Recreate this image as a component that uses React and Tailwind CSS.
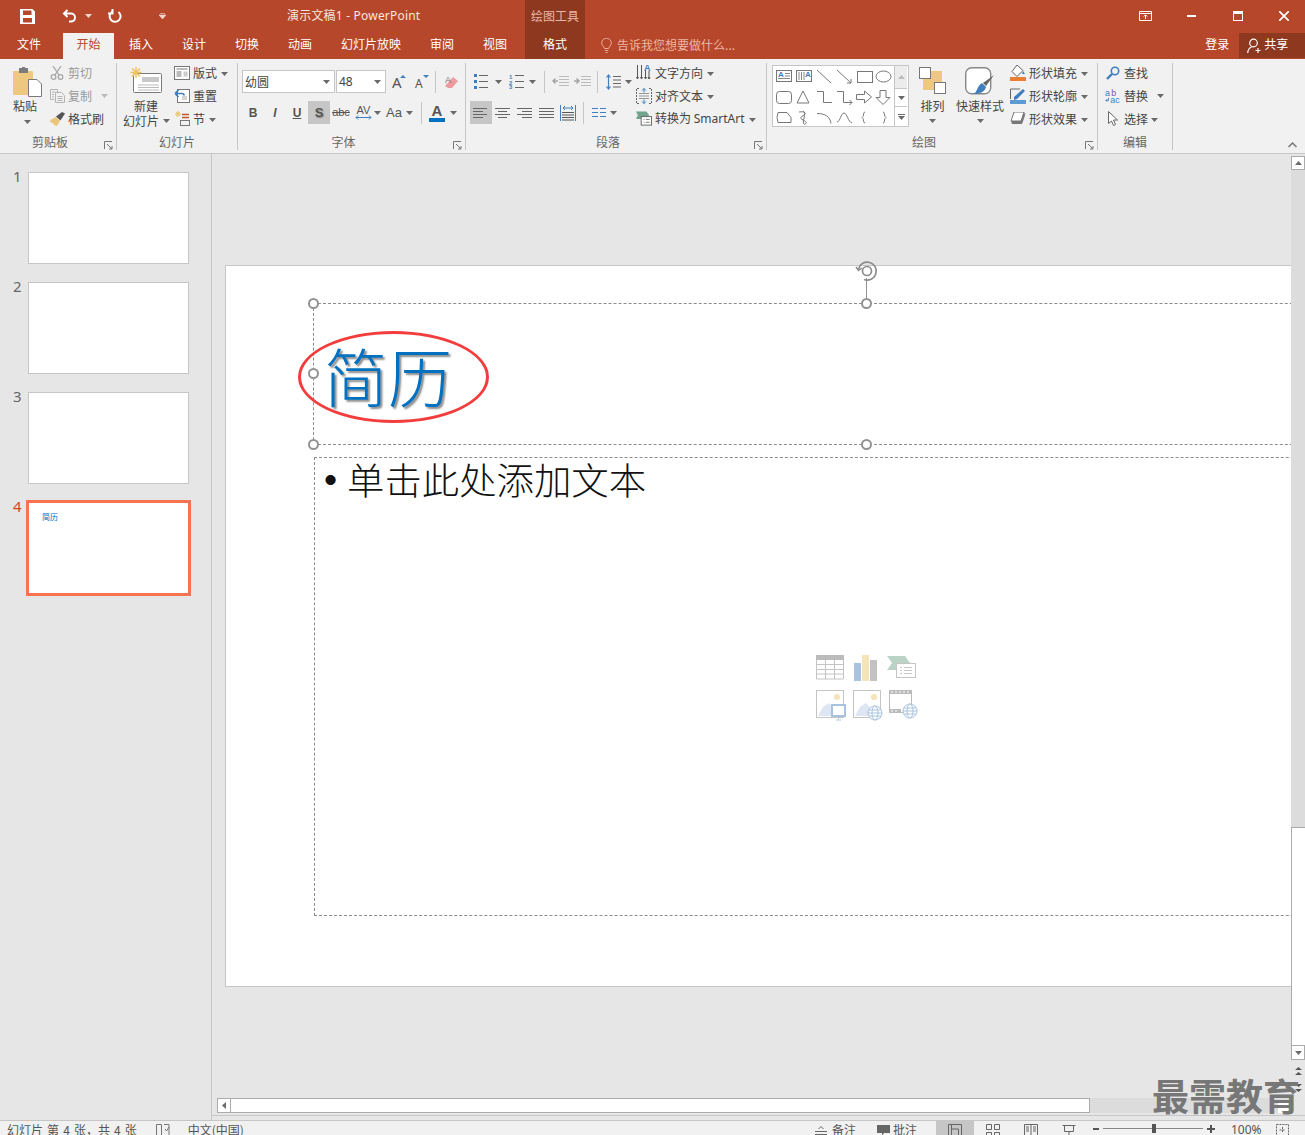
import React from 'react';

const sans = { fontFamily: '"Noto Sans", "Noto Sans CJK SC", sans-serif' };

const Caret = ({ className = '' }) => (
    <svg width="7" height="4" viewBox="0 0 7 4" className={`shrink-0 ${className}`}>
        <path d="M0 0h7L3.5 4z" fill="#6a6a6a" />
    </svg>
);

const Launcher = () => (
    <svg width="9" height="9" viewBox="0 0 9 9" fill="none" stroke="#777" className="shrink-0">
        <path d="M.5 8V.5H8M3 3l5 5M8 5v3H5" />
    </svg>
);

const Group = ({ w, label, launcher, children }) => (
    <div className="relative flex flex-col shrink-0 h-[87px] border-r border-[#c6c6c6]" style={{ width: w }}>
        <div className="h-[74px] -mt-[2px] flex">{children}</div>
        <div className={`h-[14px] leading-[14px] text-center text-[#666] text-xs ${launcher ? 'pr-[16px]' : ''}`}>{label}</div>
        {launcher && <div className="absolute right-[3px] bottom-0"><Launcher /></div>}
    </div>
);

const SmallBtn = ({ icon, label, gray, iconW = 18, gap = 2 }) => (
    <div className={`h-[23px] flex items-center text-xs ${gray ? 'text-[#999]' : 'text-[#444]'}`}>
        <div className="flex items-center justify-center shrink-0" style={{ width: iconW, marginRight: gap }}>{icon}</div>
        <span className="whitespace-nowrap">{label}</span>
    </div>
);

const Sep = ({ h = 22 }) => <div className="w-px bg-[#c6c6c6] shrink-0" style={{ height: h }} />;

// title bar icons
const SaveIcon = () => (
    <svg width="15" height="15" viewBox="0 0 15 15">
        <path fillRule="evenodd" fill="#fff" d="M0 0h12.500L15 2.500V15H0zM3 1.500v4.500h8.500V1.500zM3 9v4.500h9V9z" />
    </svg>
);
const UndoIcon = () => (
    <svg width="15" height="14" viewBox="0 0 15 14" fill="none" stroke="#fff" strokeWidth="2">
        <path d="M5.500 1L2 4.500 5.500 8M2.500 4.500H9a4 4 0 0 1 4 4c0 2.500-2 4-4 4H7" />
    </svg>
);
const RedoIcon = () => (
    <svg width="15" height="15" viewBox="0 0 15 15" fill="none" stroke="#fff" strokeWidth="2">
        <path d="M5 2.800A5.500 5.500 0 1 0 11.500 3M5.500 0v4.500H1" />
    </svg>
);

// clipboard group
const PasteIcon = () => (
    <svg width="29" height="30" viewBox="0 0 29 30">
        <rect x="0" y="4" width="20" height="24" rx="1" fill="#edc87e" />
        <rect x="6" y="1" width="9" height="5" fill="#7b7b7b" />
        <rect x="9" y="0" width="3" height="2" fill="#7b7b7b" />
        <path d="M15.500 12.500H24l4.500 4.500v12.500h-13z" fill="#fff" stroke="#7a7a7a" />
    </svg>
);
const CutIcon = () => (
    <svg width="14" height="14" viewBox="0 0 14 14" fill="none" stroke="#a8a8a8" strokeWidth="1.300">
        <path d="M3 0l6 9M11 0L5 9" />
        <circle cx="3.500" cy="11" r="2.300" /><circle cx="10.500" cy="11" r="2.300" />
    </svg>
);
const CopyIcon = () => (
    <svg width="15" height="14" viewBox="0 0 15 14" fill="none" stroke="#b5b5b5">
        <path d="M.5.500h7v3M.5.500v10h4M5.500 3.500h6l3 3v7h-9zM2 3h3M2 5.500h2M2 8h2M7.500 7.500h5M7.500 9.500h5M7.500 11.500h5" />
    </svg>
);
const BrushIcon = () => (
    <svg width="16" height="14" viewBox="0 0 16 14">
        <path d="M0 8l6-3 4 4-3 5-3-1-1-2-2 0z" fill="#eac57c" />
        <path d="M6 4.500l6-4.500 3 1.500-4.500 7z" fill="#555" />
    </svg>
);

// slides group
const NewSlideIcon = () => (
    <svg width="32" height="26" viewBox="0 0 32 26">
        <rect x="3.500" y="6.500" width="28" height="19" rx="1" fill="#fff" stroke="#7a7a7a" />
        <rect x="12" y="10" width="17" height="5" fill="#c8c8c8" />
        <path d="M8 18h21M8 20.500h21M8 23h21" stroke="#bbb" />
        <path d="M6 0v11M.5 5.500h11M2 1.500l8 8M10 1.500l-8 8" stroke="#edc35f" strokeWidth="1.500" />
    </svg>
);
const LayoutIcon = () => (
    <svg width="16" height="14" viewBox="0 0 16 14" fill="none" stroke="#777">
        <rect x=".5" y=".5" width="15" height="13" fill="#fff" />
        <path d="M2.500 3h11M2.500 6h5M2.500 8h5M2.500 10h5" /><rect x="9.500" y="5.500" width="4" height="5" fill="#ccc" stroke="none" />
    </svg>
);
const ResetIcon = () => (
    <svg width="16" height="15" viewBox="0 0 16 15" fill="none">
        <rect x="3.500" y="1.500" width="12" height="13" fill="#fff" stroke="#777" />
        <path d="M8 9h5M8 11h5" stroke="#aaa" />
        <path d="M1 5.500h7a2 2 0 0 1 2 2M1 5.500L4.500 2M1 5.500L4.500 9" stroke="#3f7fbd" strokeWidth="1.700" />
    </svg>
);
const SectionIcon = () => (
    <svg width="16" height="15" viewBox="0 0 16 15" fill="none">
        <path d="M4 0v6M1 3h6M2 1l4 4M6 1L2 5" stroke="#edc35f" />
        <path d="M8 3.500h7M8 6.500h7" stroke="#c8532c" strokeWidth="1.400" />
        <rect x="6.500" y="9.500" width="9" height="5" stroke="#777" />
    </svg>
);

// font group
const Txt = ({ className = '', children, w }) => (
    <span className={`inline-flex justify-center shrink-0 ${className}`} style={{ width: w }}>{children}</span>
);
const GrowA = ({ small }) => (
    <div className="relative w-[14px] h-[16px] text-[#555]">
        <span className={`absolute left-0 bottom-0 leading-none ${small ? 'text-xs' : 'text-[15px]'}`} style={sans}>A</span>
        <svg width="6" height="3" viewBox="0 0 6 3" className="absolute right-0 top-[1px]">
            <path d={small ? 'M0 0h6L3 3z' : 'M0 3h6L3 0z'} fill="#3f7fbd" />
        </svg>
    </div>
);
const EraserIcon = () => (
    <svg width="15" height="15" viewBox="0 0 15 15">
        <path d="M1 12L9 3l5 4-6 7H4z" fill="#ee9aa0" />
        <text x="1" y="9" fontSize="9" fill="#777" fontFamily="Liberation Sans">A</text>
    </svg>
);

// paragraph group
const LinesIcon = ({ lines }) => (
    <svg width="16" height="14" viewBox="0 0 16 14" fill="none" stroke="#666">
        {lines.map(([a, b, y]) => <path key={y} d={`M${a} ${y}.5H${b}`} />)}
    </svg>
);
const BulletsIcon = () => (
    <svg width="14" height="15" viewBox="0 0 14 15">
        <path d="M5 1.500h9M5 7.500h9M5 13.500h9" stroke="#666" />
        <path d="M0 0h3v3H0zM0 6h3v3H0zM0 12h3v3H0z" fill="#3f7fbd" />
    </svg>
);
const NumberingIcon = () => (
    <svg width="15" height="15" viewBox="0 0 15 15">
        <path d="M6 1.500h9M6 7.500h9M6 13.500h9" stroke="#666" />
        <text x="0" y="5" fontSize="6" fontWeight="700" fill="#3f7fbd" fontFamily="Liberation Sans">1</text>
        <text x="0" y="10.500" fontSize="6" fontWeight="700" fill="#3f7fbd" fontFamily="Liberation Sans">2</text>
        <text x="0" y="15" fontSize="6" fontWeight="700" fill="#3f7fbd" fontFamily="Liberation Sans">3</text>
    </svg>
);
const IndentIcon = ({ out }) => (
    <svg width="17" height="11" viewBox="0 0 17 11" fill="none" stroke="#bbb">
        <path d="M7 .5h10M7 3.500h10M7 6.500h10M7 9.500h10" />
        <path d={out ? 'M6 5H1M3.500 2.500L1 5l2.500 2.500' : 'M0 5h5M2.500 2.500L5 5 2.500 7.500'} stroke="#a5a5a5" strokeWidth="1.500" />
    </svg>
);
const SpacingIcon = () => (
    <svg width="15" height="16" viewBox="0 0 15 16" fill="none">
        <path d="M7 2.500h8M7 6h8M7 9.500h8M7 13h8" stroke="#666" />
        <path d="M2.500 1v14M.5 3.500l2-2.500 2 2.500M.5 12.500l2 2.500 2-2.500" stroke="#3f7fbd" strokeWidth="1.200" />
    </svg>
);
const TextDirIcon = () => (
    <svg width="16" height="17" viewBox="0 0 16 17" fill="none">
        <path d="M1.500 1v14M5.500 1v14M9.500 6v9M13 7v8" stroke="#555" />
        <path d="M.5 13l1 2 1-2M4.500 13l1 2 1-2M8.500 13l1 2 1-2M12 13l1 2 1-2" stroke="#555" />
        <text x="8" y="7" fontSize="9" fontWeight="700" fill="#3f7fbd" fontFamily="Liberation Sans">A</text>
    </svg>
);
const AlignTextIcon = () => (
    <svg width="16" height="16" viewBox="0 0 16 16" fill="none">
        <path d="M3 .5H.5v15H3M13 .5h2.500v15H13" stroke="#666" strokeDasharray="2 1" />
        <path d="M3 5.500h10M3 8h10M3 10.500h10" stroke="#999" />
        <path d="M8 .5v4M6 2.500L8 .5l2 2M8 11.500v4M6 13.500l2 2 2-2" stroke="#3f7fbd" />
    </svg>
);
const SmartArtIcon = () => (
    <svg width="17" height="15" viewBox="0 0 17 15">
        <path d="M0 0h11l3 4-3 4H0l2-4z" fill="#6fa58d" />
        <rect x="5.500" y="5.500" width="11" height="9" fill="#fff" stroke="#666" />
        <path d="M8 8.500h1M10.500 8.500h4M8 11.500h1M10.500 11.500h4" stroke="#777" />
    </svg>
);
const DistributedIcon = () => (
    <svg width="16" height="16" viewBox="0 0 16 16" fill="none">
        <path d="M.5 0v16M15.500 0v16" stroke="#3f7fbd" />
        <path d="M3 3h10M3 3l2-2M3 3l2 2M13 3l-2-2M13 3l-2 2" stroke="#3f7fbd" />
        <path d="M2 7.500h12M2 10h12M2 12.500h12M2 15h12" stroke="#555" />
    </svg>
);
const ColumnsIcon = () => (
    <svg width="14" height="11" viewBox="0 0 14 11" stroke="#3f7fbd">
        <path d="M0 1.500h6M0 5.500h6M0 9.500h6M8 1.500h6M8 5.500h6M8 9.500h6" />
    </svg>
);

// drawing group
const ShapesGallery = () => (
    <svg width="122" height="60" viewBox="0 0 122 60" fill="none" stroke="#777" className="shrink-0">
        <rect x="3.500" y="4.500" width="15" height="11" />
        <path d="M5 12.500h12M12 7.500h5M12 10h5" stroke="#888" />
        <text x="5" y="11" fontSize="8" fontWeight="700" fill="#3f7fbd" stroke="none" fontFamily="Liberation Sans">A</text>
        <rect x="23.500" y="4.500" width="15" height="11" />
        <path d="M26 6v8M28.500 6v8M31 6v8" stroke="#888" />
        <text x="32" y="11" fontSize="8" fontWeight="700" fill="#3f7fbd" stroke="none" fontFamily="Liberation Sans">A</text>
        <path d="M44 4l14 13M64 4l14 13M78 17v-4M78 17h-4" />
        <rect x="84.500" y="5.500" width="15" height="11" />
        <ellipse cx="110.500" cy="10.500" rx="7.500" ry="5.500" />
        <rect x="3.500" y="25.500" width="15" height="12" rx="3" />
        <path d="M30 25l6 12H24zM44 25.500h6.500v11H59M64 25.500h6.500v11H79M76.500 34l2.500 2.500-2.500 2.500" />
        <path d="M83.500 28.500h8v-3.500l7 6-7 6v-3.500h-8zM107 24.500h6v7h4l-7 7-7-7h4z" />
        <path d="M5 46.500h9l4 5v5H5l-1-5z" />
        <path d="M26 46c5-1 8 1 5 3s-5 3-1 5 4 3 2 4-2-2-1-6 1-6-1-7" />
        <path d="M44 47.500c8 0 13 3 14 10M64 56c3 0 4-9 7-9s4 9 8 10" />
        <path d="M92 46c-2 0-1 3-2 4.500l-1 1 1 1c1 1.500 0 4.500 2 4.500M110 46c2 0 1 3 2 4.500l1 1-1 1c-1 1.500 0 4.500-2 4.500" />
    </svg>
);
const ArrangeIcon = () => (
    <svg width="27" height="27" viewBox="0 0 27 27">
        <rect x="4" y="4" width="19" height="19" fill="#edc87e" />
        <rect x=".5" y=".5" width="11" height="11" fill="#fff" stroke="#777" />
        <rect x="15.500" y="15.500" width="11" height="11" fill="#fff" stroke="#777" />
    </svg>
);
const QuickStyleIcon = () => (
    <svg width="30" height="30" viewBox="0 0 30 30">
        <rect x=".7" y=".7" width="25" height="26" rx="6" fill="#fff" stroke="#888" strokeWidth="1.400" />
        <path d="M29 8l-8 11-3-3z" fill="#666" />
        <path d="M17 16l4 4c-1 5-7 7-12 7 3-2 3-8 8-11z" fill="#3f7fbd" />
    </svg>
);
const FillIcon = () => (
    <svg width="16" height="16" viewBox="0 0 16 16">
        <path d="M7 0l6 5.500-6 6-5-5z" fill="#fff" stroke="#666" />
        <path d="M13 6l2 3h-3z" fill="#3f7fbd" />
        <rect x="0" y="12" width="16" height="4" fill="#ed7d31" />
    </svg>
);
const OutlineIcon = () => (
    <svg width="16" height="16" viewBox="0 0 16 16">
        <path d="M.5 11V1H10" fill="none" stroke="#666" />
        <path d="M4 9l9-8 2 2-8 8-3 1z" fill="#3f7fbd" />
        <rect x="0" y="12" width="16" height="4" fill="#5b9bd5" />
    </svg>
);
const EffectIcon = () => (
    <svg width="16" height="14" viewBox="0 0 16 14">
        <path d="M5 1h11l-3 9H2z" fill="#ccc" />
        <path d="M4 0h10l-3 9H1z" fill="#fff" stroke="#777" />
        <path d="M1 9h10l3-9 1 3-3 9H2z" fill="#777" />
    </svg>
);

// edit group
const FindIcon = () => (
    <svg width="14" height="14" viewBox="0 0 14 14" fill="none" stroke="#3f7fbd">
        <circle cx="9" cy="5" r="3.700" strokeWidth="1.600" />
        <path d="M6 8l-5 5" strokeWidth="2.400" />
    </svg>
);
const ReplaceIcon = () => (
    <svg width="17" height="16" viewBox="0 0 17 16" fontFamily="Liberation Sans" fontSize="10">
        <text x="0" y="8" fill="#3f7fbd">a</text>
        <text x="7" y="8" fill="#8a4fb0">b</text>
        <text x="6" y="16" fill="#3f7fbd">ac</text>
        <path d="M4 10v3H1M1 13l1.500-1.500M1 13l1.500 1.500" fill="none" stroke="#3f7fbd" />
    </svg>
);
const SelectIcon = () => (
    <svg width="10" height="15" viewBox="0 0 10 15">
        <path d="M.5.500v12l3-2.500 2 4.500 2-1-2-4.500h4z" fill="#fff" stroke="#666" />
    </svg>
);

// content placeholder icons
const TableIcon = () => (
    <svg width="29" height="25" viewBox="0 0 29 25">
        <rect x="0" y="0" width="28" height="5" fill="#bbb" />
        <path d="M.5 5v19h27V5M.5 9.500h27M.5 14.500h27M.5 19h27M9.500 5v19M18.500 5v19" fill="none" stroke="#c4c4c4" />
    </svg>
);
const ChartIcon = () => (
    <svg width="23" height="26" viewBox="0 0 23 26">
        <rect x="0" y="8" width="7" height="18" fill="#a9c3de" />
        <rect x="8" y="0" width="7" height="26" fill="#f7e3b8" />
        <rect x="16" y="5" width="7" height="21" fill="#c2c2c2" />
    </svg>
);
const SmartIcon = () => (
    <svg width="30" height="24" viewBox="0 0 30 24">
        <path d="M0 1h18l5 7-5 7H0l5-7z" fill="#bbd3c7" />
        <rect x="9.500" y="8.500" width="19" height="14" fill="#fff" stroke="#c4c4c4" />
        <path d="M13 12.500h2M17 12.500h8M13 15.500h2M17 15.500h8M13 18.500h2M17 18.500h8" stroke="#c8c8c8" />
    </svg>
);
const Picture = ({ children }) => (
    <svg width="30" height="32" viewBox="0 0 30 32">
        <rect x=".5" y=".5" width="27" height="27" fill="#fff" stroke="#c4c4c4" />
        <circle cx="21" cy="7" r="3" fill="#f7e3b8" />
        <path d="M2 26l5-9 6-4 11 13z" fill="#dde6f2" />
        {children}
    </svg>
);
const Globe = ({ cx, cy }) => (
    <g fill="#fff" stroke="#a9c3de">
        <circle cx={cx} cy={cy} r="7" />
        <ellipse cx={cx} cy={cy} rx="3" ry="7" />
        <path d={`M${cx - 7} ${cy}h14M${cx - 6} ${cy - 3}h12M${cx - 6} ${cy + 3}h12`} />
    </g>
);
const VideoIcon = () => (
    <svg width="29" height="29" viewBox="0 0 29 29">
        <rect x=".5" y=".5" width="22" height="22" fill="#fff" stroke="#bbb" />
        <path d="M0 0h23v4H0zM0 19h12v4H0z" fill="#bbb" />
        <path d="M3 1v2M7 1v2M11 1v2M15 1v2M19 1v2M3 20v2M7 20v2" stroke="#fff" />
        <Globe cx={21} cy={21} />
    </svg>
);

const Handle = ({ className }) => (
    <div className={`absolute w-[11px] h-[11px] rounded-full bg-white border-2 border-[#929292] ${className}`} />
);

const TABS = ['插入', '设计', '切换', '动画', '幻灯片放映', '审阅', '视图'];

const Thumb = ({ n, active }) => (
    <div className="flex h-[110px]">
        <div className={`w-[26px] pl-[13px] -mt-[5px] text-[15px] leading-[18px] ${active ? 'text-[#d24726]' : 'text-[#666]'}`} style={sans}>{n}</div>
        {active ? (
            <div className="w-[165px] h-[96px] -mt-[2px] border-[3px] border-[#f4754f] bg-white pl-[13px] pt-[9px]">
                <div className="text-[8px] leading-[10px] text-[#0070c0]">简历</div>
            </div>
        ) : (
            <div className="ml-[2px] w-[161px] h-[92px] border border-[#c6c6c6] bg-white" />
        )}
    </div>
);

export default function App() {
    return (
        <div className="relative w-[1305px] h-[1135px] overflow-hidden flex flex-col bg-[#e6e6e6] text-xs" style={{ fontFamily: '"Noto Sans CJK SC", "Noto Sans", sans-serif' }}>
            {/* Title bar */}
            <div className="h-[32px] shrink-0 bg-[#b7472a] flex items-center text-white">
                <div className="ml-[20px]"><SaveIcon /></div>
                <div className="ml-[27px]"><UndoIcon /></div>
                <svg width="7" height="4" className="ml-[8px]"><path d="M0 0h7L3.500 4z" fill="#f3d5cc" /></svg>
                <div className="ml-[15px]"><RedoIcon /></div>
                <svg width="7" height="6" className="ml-[37px]"><path d="M1 .5h5M0 2h7L3.500 6z" stroke="#f3d5cc" strokeWidth=".6" fill="#f3d5cc" /></svg>
                <div className="ml-[121px] w-[238px] text-[#f8e5df]" style={sans}>
                    <span className="text-xs tracking-[0.2px]">演示文稿1 - PowerPoint</span>
                </div>
                <div className="w-[60px] h-full bg-[#8e3820] text-center leading-[32px] text-[#ecb6a5]">绘图工具</div>
                <svg width="13" height="10" viewBox="0 0 13 10" fill="none" stroke="#fff" className="ml-[554px]">
                    <path d="M.5.5h12v9H.5zM.5 2.500h12M6.500 8V4M4.800 5.500l1.700-1.700 1.700 1.700" />
                </svg>
                <div className="ml-[35px] w-[9px] h-[2px] bg-white" />
                <div className="ml-[37px] w-[10px] h-[10px] border border-white border-t-[3px]" />
                <svg width="10" height="10" viewBox="0 0 10 10" className="ml-[36px]" stroke="#fff" strokeWidth="1.700">
                    <path d="M0 0l10 10M10 0L0 10" />
                </svg>
            </div>

            {/* Tabs */}
            <div className="h-[27px] shrink-0 bg-[#b7472a] flex items-stretch text-white">
                <div className="w-[58px] pl-[17px] leading-[24px]">文件</div>
                <div className="ml-[5px] mt-px w-[51px] bg-[#f1f1f1] text-[#b7472a] text-center leading-[22px]">开始</div>
                <div className="ml-[0.5px] flex">
                    {TABS.map(t => <div key={t} className="px-[14.5px] leading-[24px]">{t}</div>)}
                </div>
                <div className="ml-[3.5px] w-[60px] bg-[#8e3820] text-center leading-[24px]">格式</div>
                <svg width="11" height="15" viewBox="0 0 11 15" fill="none" stroke="#e9ac9a" className="ml-[16px] mt-[6px]">
                    <path d="M3.500 10.500C3 8.500.7 7.500.7 5A4.800 4.800 0 0 1 10.300 5c0 2.500-2.300 3.500-2.800 5.500zM3.800 12.500h3.400M4.500 14.500h2" />
                </svg>
                <div className="ml-[5px] leading-[26px] text-[#eeb5a4] whitespace-nowrap">告诉我您想要做什么...</div>
                <div className="ml-[470px] w-[24px] leading-[24px] whitespace-nowrap">登录</div>
                <div className="ml-[10px] mt-px mb-px flex-1 bg-[#8e3820] flex items-center pl-[8px]">
                    <svg width="15" height="16" viewBox="0 0 15 16" fill="none" stroke="#fff" strokeWidth="1.200">
                        <circle cx="6.500" cy="5" r="3.800" />
                        <path d="M.7 15c.3-3.500 2-5.500 4-6M11 10v5M8.500 12.500h5" />
                    </svg>
                    <span className="ml-[2px] -mt-[3px]">共享</span>
                </div>
            </div>

            {/* Ribbon */}
            <div className="relative h-[95px] shrink-0 bg-[#f1f1f1] border-b border-[#c6c6c6] pt-[4px] flex">
                <Group w={117} label="剪贴板" launcher>
                    <div className="w-[50px] pl-[13px] pt-[6px] flex flex-col text-[#444]">
                        <PasteIcon />
                        <div className="leading-[18px]">粘贴</div>
                        <Caret className="ml-[11px] mt-[5px]" />
                    </div>
                    <div>
                        <SmallBtn gray icon={<CutIcon />} iconW={14} gap={4} label="剪切" />
                        <div className="flex items-center">
                            <SmallBtn gray icon={<CopyIcon />} iconW={15} gap={3} label="复制" />
                            <Caret className="ml-[9px] opacity-40" />
                        </div>
                        <SmallBtn icon={<BrushIcon />} iconW={16} gap={2} label="格式刷" />
                    </div>
                </Group>

                <Group w={121} label="幻灯片">
                    <div className="w-[57px] flex flex-col items-start pt-[6px] text-[#444]">
                        <div className="ml-[13px]"><NewSlideIcon /></div>
                        <div className="ml-[17px] mt-[5px] leading-[15px]">新建</div>
                        <div className="ml-[6px] flex items-center leading-[15px] whitespace-nowrap">幻灯片<Caret className="ml-[4px]" /></div>
                    </div>
                    <div>
                        <SmallBtn icon={<LayoutIcon />} iconW={16} gap={3} label={<>版式<Caret className="inline ml-[4px] align-middle" /></>} />
                        <SmallBtn icon={<ResetIcon />} iconW={16} gap={3} label="重置" />
                        <SmallBtn icon={<SectionIcon />} iconW={16} gap={3} label={<>节<Caret className="inline ml-[4px] align-middle" /></>} />
                    </div>
                </Group>

                <Group w={228} label="字体" launcher>
                    <div className="pl-[4px] flex flex-col">
                        <div className="h-[23px] mt-[9px] flex items-center">
                            <div className="w-[93px] h-[23px] bg-white border border-[#c6c6c6] flex items-center justify-between pl-[2px] pr-[4px] text-[#444]">幼圆<Caret /></div>
                            <div className="w-[50px] ml-px h-[23px] bg-white border border-[#c6c6c6] flex items-center justify-between pl-[2px] pr-[4px] text-[#444]" style={sans}>48<Caret /></div>
                            <div className="ml-[6px]"><GrowA /></div>
                            <div className="ml-[9px]"><GrowA small /></div>
                            <div className="ml-[6px]"><Sep /></div>
                            <div className="ml-[8px]"><EraserIcon /></div>
                        </div>
                        <div className="h-[23px] mt-[8px] flex items-center text-[#555] font-['Liberation_Sans']">
                            <Txt w={22} className="font-bold">B</Txt>
                            <Txt w={22} className="italic font-bold">I</Txt>
                            <Txt w={22} className="underline font-bold">U</Txt>
                            <div className="w-[22px] h-[23px] bg-[#c6c6c6] flex items-center justify-center font-bold text-[13px] [text-shadow:1px_1px_1px_#888]">S</div>
                            <Txt w={22} className="line-through text-[11px]">abc</Txt>
                            <div className="ml-[3px] w-[17px] flex flex-col items-center leading-[10px]">
                                <span className="text-[11px]">AV</span>
                                <svg width="17" height="5" viewBox="0 0 17 5" fill="none" stroke="#3f7fbd"><path d="M1 2.500h15M3 .5l-2 2 2 2M14 .5l2 2-2 2" /></svg>
                            </div>
                            <Caret className="ml-[2px]" />
                            <span className="ml-[5px] text-[13px]">Aa</span>
                            <Caret className="ml-[4px]" />
                            <div className="ml-[8px]"><Sep /></div>
                            <div className="ml-[7px] w-[16px] flex flex-col items-center leading-[14px]">
                                <span className="text-[15px] font-bold text-[#555]">A</span>
                                <div className="w-[16px] h-[4px] bg-[#0070c0]" />
                            </div>
                            <Caret className="ml-[5px]" />
                        </div>
                    </div>
                </Group>

                <Group w={301} label="段落" launcher>
                    <div className="w-[170px] pl-[4px] flex flex-col">
                        <div className="h-[23px] mt-[9px] flex items-center">
                            <div className="ml-[4px]"><BulletsIcon /></div><Caret className="ml-[7px]" />
                            <div className="ml-[7px]"><NumberingIcon /></div><Caret className="ml-[5px]" />
                            <div className="ml-[8px]"><Sep /></div>
                            <div className="ml-[7px]"><IndentIcon out /></div>
                            <div className="ml-[5px]"><IndentIcon /></div>
                            <div className="ml-[6px]"><Sep /></div>
                            <div className="ml-[8px]"><SpacingIcon /></div><Caret className="ml-[4px]" />
                        </div>
                        <div className="h-[23px] mt-[8px] flex items-center">
                            <div className="w-[22px] h-[23px] bg-[#c6c6c6] flex items-center justify-center"><LinesIcon lines={[[0, 14, 2], [0, 10, 5], [0, 14, 8], [0, 10, 11]]} /></div>
                            <div className="ml-[3px]"><LinesIcon lines={[[0, 15, 2], [3, 12, 5], [0, 15, 8], [3, 12, 11]]} /></div>
                            <div className="ml-[6px]"><LinesIcon lines={[[0, 15, 2], [5, 15, 5], [0, 15, 8], [5, 15, 11]]} /></div>
                            <div className="ml-[6px]"><LinesIcon lines={[[0, 15, 2], [0, 15, 5], [0, 15, 8], [0, 15, 11]]} /></div>
                            <div className="ml-[5px]"><DistributedIcon /></div>
                            <div className="ml-[7px]"><Sep /></div>
                            <div className="ml-[8px]"><ColumnsIcon /></div><Caret className="ml-[4px]" />
                        </div>
                    </div>
                    <div>
                        <SmallBtn icon={<TextDirIcon />} iconW={16} gap={3} label={<>文字方向<Caret className="inline ml-[4px] align-middle" /></>} />
                        <SmallBtn icon={<AlignTextIcon />} iconW={16} gap={3} label={<>对齐文本<Caret className="inline ml-[4px] align-middle" /></>} />
                        <SmallBtn icon={<SmartArtIcon />} iconW={16} gap={3} label={<>转换为 <span style={sans}>SmartArt</span><Caret className="inline ml-[4px] align-middle" /></>} />
                    </div>
                </Group>

                <Group w={331} label="绘图" launcher>
                    <div className="ml-[5px] mt-[4px] w-[137px] h-[62px] border border-[#c6c6c6] bg-white flex">
                        <ShapesGallery />
                        <div className="w-[13px] -ml-px flex flex-col border-l border-[#c6c6c6]">
                            <div className="h-[22px] bg-[#ececec] flex items-center justify-center"><svg width="7" height="4"><path d="M0 4h7L3.500 0z" fill="#bbb" /></svg></div>
                            <div className="h-[19px] border-y border-[#c6c6c6] flex items-center justify-center"><Caret /></div>
                            <div className="flex-1 flex flex-col items-center justify-center"><div className="w-[7px] h-px bg-[#6a6a6a] mb-px" /><Caret /></div>
                        </div>
                    </div>
                    <div className="ml-[10px] w-[27px] pt-[6px] flex flex-col items-center text-[#444]">
                        <ArrangeIcon />
                        <div className="mt-[3px] leading-[18px] whitespace-nowrap">排列</div>
                        <Caret className="mt-[4px]" />
                    </div>
                    <div className="ml-[10px] w-[48px] pt-[6px] flex flex-col items-center text-[#444]">
                        <QuickStyleIcon />
                        <div className="leading-[18px] whitespace-nowrap">快速样式</div>
                        <Caret className="mt-[4px]" />
                    </div>
                    <div className="ml-[6px]">
                        <SmallBtn icon={<FillIcon />} iconW={16} gap={3} label={<>形状填充<Caret className="inline ml-[4px] align-middle" /></>} />
                        <SmallBtn icon={<OutlineIcon />} iconW={16} gap={3} label={<>形状轮廓<Caret className="inline ml-[4px] align-middle" /></>} />
                        <SmallBtn icon={<EffectIcon />} iconW={16} gap={3} label={<>形状效果<Caret className="inline ml-[4px] align-middle" /></>} />
                    </div>
                </Group>

                <Group w={75} label="编辑">
                    <div className="pl-[7px]">
                        <SmallBtn icon={<FindIcon />} iconW={15} gap={4} label="查找" />
                        <div className="flex items-center">
                            <SmallBtn icon={<ReplaceIcon />} iconW={15} gap={4} label="替换" />
                            <Caret className="ml-[9px]" />
                        </div>
                        <SmallBtn icon={<SelectIcon />} iconW={15} gap={4} label={<>选择<Caret className="inline ml-[3px] align-middle" /></>} />
                    </div>
                </Group>

                <svg width="9" height="6" viewBox="0 0 9 6" fill="none" stroke="#777" strokeWidth="1.500" className="absolute right-[8px] bottom-[5px]">
                    <path d="M.5 5l4-4 4 4" />
                </svg>
            </div>

            {/* Workspace */}
            <div className="flex-1 min-h-0 flex">
                {/* Slide list */}
                <div className="w-[212px] shrink-0 border-r border-[#c6c6c6] pt-[18px]">
                    <Thumb n={1} />
                    <Thumb n={2} />
                    <Thumb n={3} />
                    <Thumb n={4} active />
                </div>

                <div className="flex-1 min-w-0 flex flex-col">
                    <div className="flex-1 min-h-0 flex">
                        {/* Canvas: slide runs past the right edge */}
                        <div className="relative flex-1 min-w-0 overflow-hidden">
                            <div className="absolute left-[13px] top-[111px] w-[1300px] h-[722px] bg-white border border-[#c6c6c6]">
                                {/* title placeholder */}
                                <div className="absolute left-[87px] top-[37px] w-[1100px] h-[142px] border border-dashed border-[#8c8c8c]" />
                                <div className="absolute left-[98px] top-[64px] text-[64px] leading-[88px] font-light text-[#0070c0] whitespace-nowrap [text-shadow:2px_2px_2px_#8a8a8a]">简历</div>
                                <div className="absolute left-[72px] top-[65px] w-[191px] h-[92px] rounded-[50%] border-[3px] border-[#f33d3d]" />
                                <Handle className="left-[82px] top-[32px]" />
                                <Handle className="left-[635px] top-[32px]" />
                                <Handle className="left-[82px] top-[102px]" />
                                <Handle className="left-[82px] top-[173px]" />
                                <Handle className="left-[635px] top-[173px]" />
                                <div className="absolute left-[640px] top-[12px] w-px h-[21px] bg-[#929292]" />
                                <svg width="24" height="24" viewBox="0 0 24 24" fill="none" stroke="#8c8c8c" strokeWidth="1.700" className="absolute left-[629px] top-[-7px]">
                                    <path d="M3.500 10A9 9 0 1 1 9 20.500" />
                                    <circle cx="12" cy="12" r="4.500" />
                                    <path d="M1 8l2.500 3.500L7 9" strokeWidth="1.500" />
                                </svg>

                                {/* body placeholder */}
                                <div className="absolute left-[88px] top-[191px] w-[1100px] h-[459px] border border-dashed border-[#8c8c8c]" />
                                <div className="absolute left-[98px] top-[190px] flex items-center h-[48px] text-[37.4px] leading-none text-[#111] whitespace-nowrap font-light">
                                    <span className="w-[23px] text-[#111] font-['Liberation_Sans']">•</span>
                                    <span>单击此处添加文本</span>
                                </div>
                                <div className="absolute left-[590px] top-[389px] w-[104px] grid grid-cols-3 gap-y-[9px] gap-x-[6px]">
                                    <TableIcon />
                                    <div className="ml-[1px]"><ChartIcon /></div>
                                    <div className="-ml-[2px]"><SmartIcon /></div>
                                    <Picture><rect x="16" y="15" width="13" height="11" fill="#fff" stroke="#a9c3de" strokeWidth="2" /><path d="M22.500 26v3M20 30h5" stroke="#a9c3de" /></Picture>
                                    <Picture><Globe cx={22} cy={23} /></Picture>
                                    <VideoIcon />
                                </div>
                            </div>
                        </div>

                        {/* Vertical scrollbar */}
                        <div className="w-[14px] shrink-0 flex flex-col pt-[2px]">
                            <div className="h-[14px] bg-white border border-[#ababab] flex items-center justify-center"><svg width="7" height="4"><path d="M0 4h7L3.500 0z" fill="#6a6a6a" /></svg></div>
                            <div className="h-[657px] bg-[#dcdcdc]" />
                            <div className="h-[219px] bg-white border-y border-l border-[#ababab]" />
                            <div className="h-[14px] bg-white border-x border-b border-[#ababab] flex items-center justify-center"><Caret /></div>
                            <div className="mt-[7px] flex flex-col items-center gap-[9px]">
                                <svg width="7" height="8" viewBox="0 0 7 8"><path d="M0 3h7L3.500 0zM0 8h7L3.500 5z" fill="#555" /></svg>
                                <svg width="7" height="8" viewBox="0 0 7 8"><path d="M0 0h7L3.500 3zM0 5h7L3.500 8z" fill="#555" /></svg>
                            </div>
                        </div>
                    </div>

                    {/* Horizontal scrollbar */}
                    <div className="h-[22px] shrink-0 pl-[5px]">
                        <div className="h-[15px] flex mr-[14px]">
                            <div className="w-[14px] bg-white border border-[#ababab] flex items-center justify-center"><svg width="4" height="7"><path d="M4 0v7L0 3.500z" fill="#6a6a6a" /></svg></div>
                            <div className="w-[860px] -ml-px bg-white border border-[#ababab]" />
                            <div className="flex-1 bg-[#dcdcdc] flex justify-end items-end pr-[3px]">
                                <div className="w-[10px] h-[10px] bg-white" />
                            </div>
                        </div>
                        <div className="h-[5px] mt-[2px] -ml-[5px] border-t border-[#c6c6c6]" />
                    </div>
                </div>
            </div>

            {/* Status bar */}
            <div className="h-[15px] shrink-0 border-t border-[#c6c6c6] bg-[#f1f1f1] flex items-start text-[#555] overflow-hidden">
                <span className="ml-[7px] leading-[18px] whitespace-nowrap [word-spacing:1.4px]">幻灯片 第 4 张，共 4 张</span>
                <svg width="14" height="12" viewBox="0 0 14 12" fill="none" stroke="#777" className="ml-[19px] mt-[3px]">
                    <path d="M.5.5h5v11h-5zM8 .5h5v11H8M9 5l1.500 2L13 3" />
                </svg>
                <span className="ml-[18px] leading-[18px] whitespace-nowrap">中文(中国)</span>
                <svg width="12" height="9" viewBox="0 0 12 9" fill="none" stroke="#666" className="ml-[571px] mt-[5px]">
                    <path d="M0 8.500h12M0 5.500h12M3.500 3L6 .5 8.500 3" />
                </svg>
                <span className="ml-[5px] leading-[18px]">备注</span>
                <svg width="13" height="11" viewBox="0 0 13 11" className="ml-[21px] mt-[4px]"><path d="M0 0h13v8H7l-2 3V8H0z" fill="#666" /></svg>
                <span className="ml-[3px] leading-[18px]">批注</span>
                <div className="ml-[19px] w-[38px] h-full bg-[#c6c6c6] flex justify-center pt-[3px]">
                    <svg width="14" height="12" viewBox="0 0 14 12" fill="none" stroke="#666"><path d="M.5.5h13v11H.5zM3.500.5v11M3.500 5h7v6.500" /></svg>
                </div>
                <svg width="14" height="12" viewBox="0 0 14 12" fill="none" stroke="#666" className="ml-[12px] mt-[3px]"><path d="M.5.5h5v5h-5zM8.500.5h5v5h-5zM.5 8.500h5v4h-5zM8.500 8.500h5v4h-5z" /></svg>
                <svg width="14" height="12" viewBox="0 0 14 12" fill="none" stroke="#666" className="ml-[24px] mt-[3px]"><path d="M.5.5h13v11H.5zM7 .5v11M2 3h3M2 5h3M2 7h3M9 3h3M9 5h3M9 7h3" /></svg>
                <svg width="14" height="12" viewBox="0 0 14 12" fill="none" stroke="#666" className="ml-[24px] mt-[3px]"><path d="M.5 1.500h13M2.500 1.500v6h9v-6M7 7.500V12" /></svg>
                <div className="ml-[17px] mt-[7px] w-[6px] h-[2px] bg-[#555]" />
                <div className="ml-[4px] mt-[7px] relative w-[100px] h-px bg-[#888]">
                    <div className="absolute left-[49px] -top-[4px] w-[4px] h-[9px] bg-[#555]" />
                </div>
                <svg width="8" height="8" viewBox="0 0 8 8" className="ml-[4px] mt-[4px]" stroke="#555" strokeWidth="2"><path d="M0 4h8M4 0v8" /></svg>
                <span className="ml-[16px] leading-[18px]" style={sans}>100%</span>
                <svg width="13" height="12" viewBox="0 0 13 12" fill="none" stroke="#666" className="ml-[14px] mt-[3px]"><path d="M.5.500h12v11H.5zM6.500 3v6M3.500 6h6" strokeDasharray="2 1" /></svg>
            </div>

            {/* Watermark */}
            <div className="absolute left-[1152px] top-[1074px] text-[37px] leading-[42px] font-bold text-[#777] whitespace-nowrap">最需教育</div>
        </div>
    );
}
